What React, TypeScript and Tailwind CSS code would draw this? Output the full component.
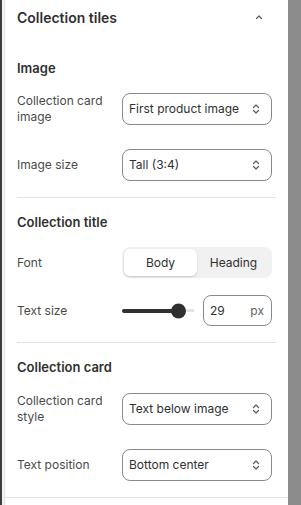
import React from "react";

function UpDown() {
  return (
    <svg width="14" height="16" viewBox="0 0 14 16" fill="none" className="text-[#5c5c5c]">
      <path d="M4.5 6.5 7 4l2.5 2.5" stroke="currentColor" strokeWidth="1.2" strokeLinecap="round" strokeLinejoin="round" />
      <path d="M4.5 9.5 7 12l2.5-2.5" stroke="currentColor" strokeWidth="1.2" strokeLinecap="round" strokeLinejoin="round" />
    </svg>
  );
}

function Select({ value }: { value: string }) {
  return (
    <div className="flex h-[32px] w-[150px] items-center justify-between rounded-lg border border-[#8a8a8a] bg-white pl-[6px] pr-[8px] text-[12px] text-[#303030]">
      <span>{value}</span>
      <UpDown />
    </div>
  );
}

function Row({ label, children }: { label: string; children: React.ReactNode }) {
  return (
    <div className="flex items-center">
      <div className="w-[105px] pr-2 text-[12px] leading-[16px] text-[#4a4a4a]">{label}</div>
      {children}
    </div>
  );
}

export default function App() {
  return (
    <div className="flex h-[505px] w-[301px] bg-[#8c8c8c] font-['Inter',sans-serif]">
      <div className="w-[2px] bg-[#3d3d3d]" />
      <div className="w-[2px] bg-[#f3f3f3]" />
      <div className="flex w-[284px] flex-col border-l border-[#e3e3e3] bg-white">
        {/* header */}
        <div className="flex h-[34px] items-center justify-between pl-[12px] pr-[22px]">
          <span className="text-[14px] font-semibold text-[#303030]">Collection tiles</span>
          <svg width="14" height="14" viewBox="0 0 14 14" fill="none">
            <path d="M4.5 8.5 7 6l2.5 2.5" stroke="#5c5c5c" strokeWidth="1.2" strokeLinecap="round" strokeLinejoin="round" />
          </svg>
        </div>

        <div className="mx-[12px] flex flex-col">
          {/* Image */}
          <div className="flex flex-col pt-[26px] pb-[16px]">
            <div className="mb-[17px] text-[13px] font-semibold leading-[16px] text-[#303030]">Image</div>
            <div className="flex flex-col gap-[24px]">
              <Row label="Collection card image">
                <Select value="First product image" />
              </Row>
              <Row label="Image size">
                <Select value="Tall (3:4)" />
              </Row>
            </div>
          </div>

          <div className="h-px bg-[#e3e3e3]" />

          {/* Collection title */}
          <div className="flex flex-col pt-[16px] pb-[16px]">
            <div className="mb-[17px] text-[13px] font-semibold leading-[16px] text-[#303030]">Collection title</div>
            <div className="flex flex-col gap-[17px]">
              <Row label="Font">
                <div className="flex h-[31px] w-[150px] items-center rounded-lg bg-[#f1f1f1] p-[2px] text-[12px] text-[#303030]">
                  <div className="flex h-full w-[73px] items-center justify-center rounded-md bg-white shadow-[0_1px_2px_rgba(0,0,0,0.18)]">
                    Body
                  </div>
                  <div className="flex h-full flex-1 items-center justify-center">Heading</div>
                </div>
              </Row>
              <Row label="Text size">
                <div className="flex w-[150px] items-center justify-between">
                  <div className="relative flex h-[31px] w-[73px] items-center">
                    <div className="h-[4px] w-[56px] rounded-l-full bg-[#303030]" />
                    <div className="ml-[8px] h-[3px] w-[8px] bg-[#e3e3e3]" />
                    <div className="absolute left-[49px] top-1/2 h-[15px] w-[15px] -translate-y-1/2 rounded-full bg-[#303030]" />
                  </div>
                  <div className="flex h-[31px] w-[69px] items-center justify-between rounded-lg border border-[#8a8a8a] pl-[6px] pr-[7px] text-[12px]">
                    <span className="text-[#303030]">29</span>
                    <span className="text-[#616161]">px</span>
                  </div>
                </div>
              </Row>
            </div>
          </div>

          <div className="h-px bg-[#e3e3e3]" />

          {/* Collection card */}
          <div className="flex flex-col pt-[16px] pb-[16px]">
            <div className="mb-[18px] text-[13px] font-semibold leading-[16px] text-[#303030]">Collection card</div>
            <div className="flex flex-col gap-[24px]">
              <Row label="Collection card style">
                <Select value="Text below image" />
              </Row>
              <Row label="Text position">
                <Select value="Bottom center" />
              </Row>
            </div>
          </div>
        </div>
        <div className="h-px bg-[#e3e3e3]" />
      </div>
    </div>
  );
}
